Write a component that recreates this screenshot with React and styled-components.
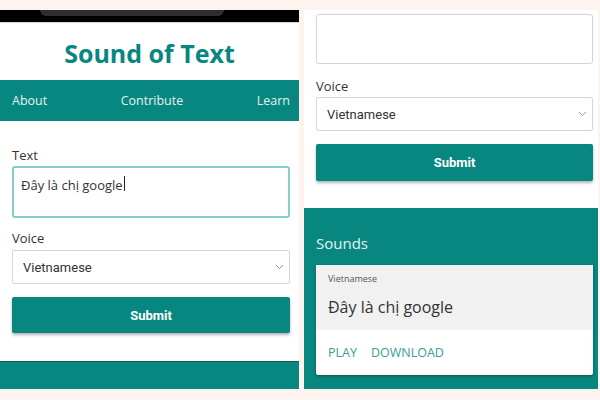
import React from 'react';
import styled, { createGlobalStyle } from 'styled-components';

const teal = '#07877f';

const GlobalStyle = createGlobalStyle`
  * { box-sizing: border-box; }
  body {
    margin: 0;
    background: #fdf4ef;
    font-family: "Open Sans", "Liberation Sans", sans-serif;
  }
`;

const Page = styled.div`
  width: 600px;
  height: 400px;
  padding: 10px 0 11px 0;
  display: flex;
  gap: 5px;
  overflow: hidden;
`;

const Phone = styled.div`
  width: ${p => p.width}px;
  display: flex;
  flex-direction: column;
  background: #fff;
`;

const StatusBar = styled.div`
  height: 13px;
  background: #000;
  display: flex;
  justify-content: flex-start;
  padding-left: 40px;
  border-bottom: 1px solid #d8d8d8;
`;

const Notch = styled.div`
  width: 184px;
  height: 6px;
  background: #2e2e2e;
  border-radius: 0 0 10px 10px;
`;

const Header = styled.div`
  height: 57px;
  display: flex;
  align-items: center;
  justify-content: center;
  h1 {
    margin: 0;
    font-size: 25px;
    font-weight: 700;
    color: ${teal};
    padding-top: 2px;
  }
`;

const Nav = styled.nav`
  height: 41px;
  background: ${teal};
  display: flex;
  align-items: center;
  justify-content: space-between;
  padding: 0 9px 0 12px;
  a {
    color: #e4f3f1;
    font-size: 12.5px;
    text-decoration: none;
  }
`;

const Form = styled.div`
  flex: ${p => (p.fill ? 1 : 'none')};
  height: ${p => p.height}px;
  padding: ${p => p.top}px ${p => p.right}px 0 ${p => p.left}px;
  display: flex;
  flex-direction: column;
`;

const Label = styled.div`
  font-size: 13px;
  line-height: 16px;
  color: #333;
  font-weight: 500;
  margin-top: ${p => p.mt || 0}px;
  margin-bottom: ${p => p.mb || 3}px;
`;

const TextBox = styled.div`
  height: ${p => p.height}px;
  border: ${p => (p.focused ? `2px solid #86cfc8` : '1px solid #d4d4d4')};
  border-radius: 3px;
  padding: 8px 7px;
  font-size: 13px;
  color: #333;
  display: flex;
  align-items: flex-start;
`;

const Caret = styled.span`
  display: inline-block;
  width: 1px;
  height: 15px;
  background: #222;
  margin-left: 1px;
`;

const Select = styled.div`
  height: 34px;
  border: 1px solid #d6d6d6;
  border-radius: 2px;
  display: flex;
  align-items: center;
  justify-content: space-between;
  padding: 0 5px 0 10px;
  font-family: Roboto, "Liberation Sans", sans-serif;
  font-size: 13px;
  color: #333;
`;

const SubmitButton = styled.button`
  height: ${p => p.height}px;
  margin-top: 13px;
  border: none;
  border-radius: 2px;
  background: ${teal};
  color: #fff;
  font-family: Roboto, "Liberation Sans", sans-serif;
  font-weight: 700;
  font-size: 13px;
  box-shadow: 0 2px 3px rgba(0, 0, 0, 0.3);
`;

const Footer = styled.div`
  height: 28px;
  background: ${teal};
  border-top: 1px solid #0b5e58;
`;

const Sounds = styled.section`
  flex: 1;
  background: ${teal};
  padding: 25px 5px 0 12px;
  h2 {
    margin: 0 0 12px;
    font-size: 15px;
    line-height: 20px;
    font-weight: 400;
    color: #e4f3f1;
  }
`;

const Card = styled.div`
  background: #fff;
  border-radius: 2px;
  box-shadow: 0 1px 3px rgba(0, 0, 0, 0.35);
`;

const CardBody = styled.div`
  height: 65px;
  background: #f1f1f1;
  padding: 8px 12px 0;
  small {
    display: block;
    font-size: 9px;
    line-height: 12px;
    color: #555;
  }
  p {
    margin: 11px 0 0;
    font-size: 16px;
    line-height: 22px;
    color: #333;
  }
`;

const Actions = styled.div`
  height: 45px;
  display: flex;
  align-items: center;
  gap: 14px;
  padding: 0 12px;
  span {
    font-size: 12.5px;
    color: #3a9c94;
  }
`;

const Chevron = () => (
  <svg width="9" height="6" viewBox="0 0 9 6">
    <path d="M1 1l3.5 3.5L8 1" fill="none" stroke="#999" strokeWidth="1" />
  </svg>
);

export default function App() {
  return (
    <>
      <GlobalStyle />
      <Page>
        <Phone width={299}>
          <StatusBar>
            <Notch />
          </StatusBar>
          <Header>
            <h1>Sound of Text</h1>
          </Header>
          <Nav>
            <a>About</a>
            <a>Contribute</a>
            <a>Learn</a>
          </Nav>
          <Form fill top={26} left={12} right={9}>
            <Label>Text</Label>
            <TextBox focused height={52}>
              Đây là chị google<Caret />
            </TextBox>
            <Label mt={12} mb={4}>Voice</Label>
            <Select>
              Vietnamese
              <Chevron />
            </Select>
            <SubmitButton height={36}>Submit</SubmitButton>
          </Form>
          <Footer />
        </Phone>
        <Phone width={294}>
          <Form height={198} top={4} left={12} right={5}>
            <TextBox height={50} />
            <Label mt={14}>Voice</Label>
            <Select>
              Vietnamese
              <Chevron />
            </Select>
            <SubmitButton height={37}>Submit</SubmitButton>
          </Form>
          <Sounds>
            <h2>Sounds</h2>
            <Card>
              <CardBody>
                <small>Vietnamese</small>
                <p>Đây là chị google</p>
              </CardBody>
              <Actions>
                <span>PLAY</span>
                <span>DOWNLOAD</span>
              </Actions>
            </Card>
          </Sounds>
        </Phone>
      </Page>
    </>
  );
}
